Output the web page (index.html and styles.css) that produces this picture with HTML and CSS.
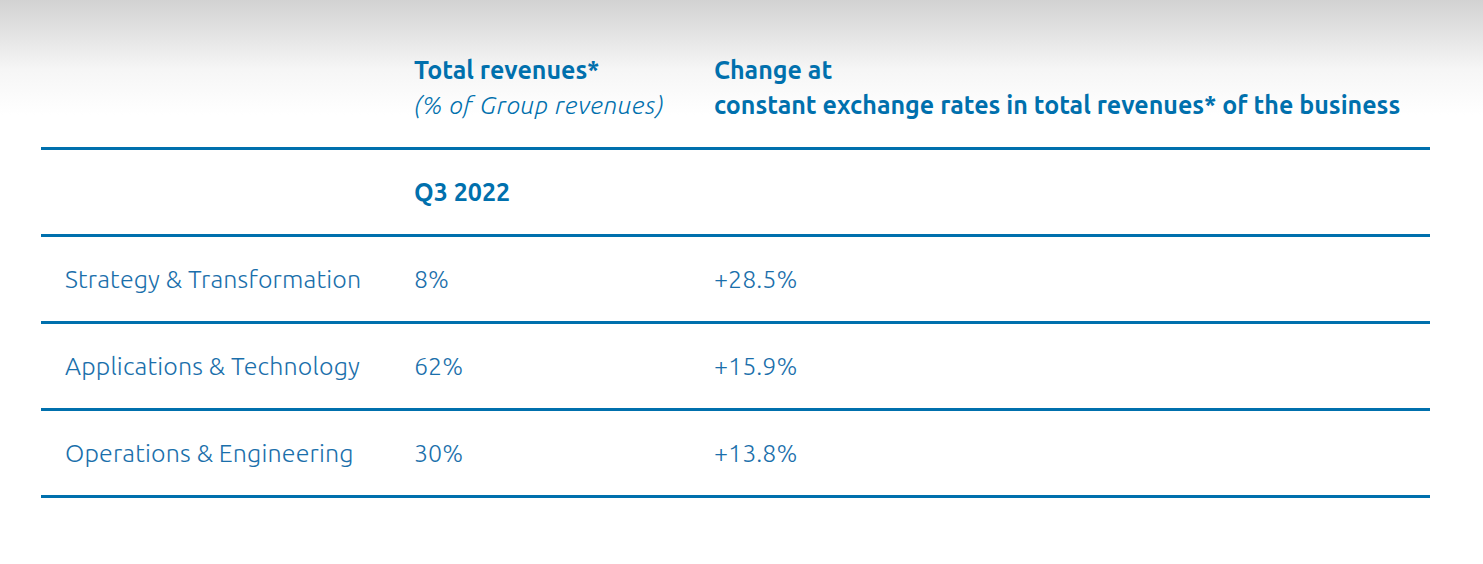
FILE: index.html
```html
<!DOCTYPE html>
<html lang="en">
<head>
<meta charset="utf-8">
<title>Revenues by business</title>
<link rel="stylesheet" href="styles.css">
</head>
<body>
<div class="wrap">
  <table class="rev">
    <thead>
      <tr class="head">
        <th class="c1"></th>
        <th class="c2"><span class="b">Total revenues*</span><br><span class="i">(% of Group revenues)</span></th>
        <th class="c3"><span class="b">Change at<br>constant exchange rates in total revenues* of the business</span></th>
      </tr>
      <tr class="period">
        <th class="c1"></th>
        <th class="c2">Q3 2022</th>
        <th class="c3"></th>
      </tr>
    </thead>
    <tbody>
      <tr><td class="c1">Strategy &amp; Transformation</td><td class="c2">8%</td><td class="c3">+28.5%</td></tr>
      <tr><td class="c1">Applications &amp; Technology</td><td class="c2">62%</td><td class="c3">+15.9%</td></tr>
      <tr><td class="c1">Operations &amp; Engineering</td><td class="c2">30%</td><td class="c3">+13.8%</td></tr>
    </tbody>
  </table>
</div>
</body>
</html>
```
FILE: styles.css
```css
html, body {
  margin: 0;
  height: 100%;
}
body {
  background: #fff linear-gradient(to bottom, #d2d2d2 0px, #f6f6f6 70px, #ffffff 115px) no-repeat;
  background-size: 100% 130px;
  font-family: Ubuntu, Lato, "Noto Sans", sans-serif;
  color: #0070ad;
}
.wrap {
  padding: 0 53px 0 41px;
}
.rev {
  width: 1389px;
  border-collapse: collapse;
  table-layout: fixed;
}
.rev tr {
  border-bottom: 3px solid #0070ad;
}
.rev th, .rev td {
  box-sizing: border-box;
  text-align: left;
  padding: 0;
  vertical-align: middle;
}
.rev .c1 { width: 373px; padding-left: 24px; }
.rev .c2 { width: 300px; }
.head th {
  height: 148px;
  vertical-align: top;
  padding-top: 53px;
  font-size: 25px;
  line-height: 35px;
}
.b {
  font-weight: 700;
}
.i {
  font-weight: 300;
  font-style: italic;
  letter-spacing: 0.75px;
}
.period th {
  height: 87px;
  font-size: 25px;
  font-weight: 700;
}
.rev td {
  height: 87px;
  font-size: 25px;
  font-weight: 300;
  color: #1a6fab;
}
.rev td.c1 {
  letter-spacing: 0.16px;
}
```
